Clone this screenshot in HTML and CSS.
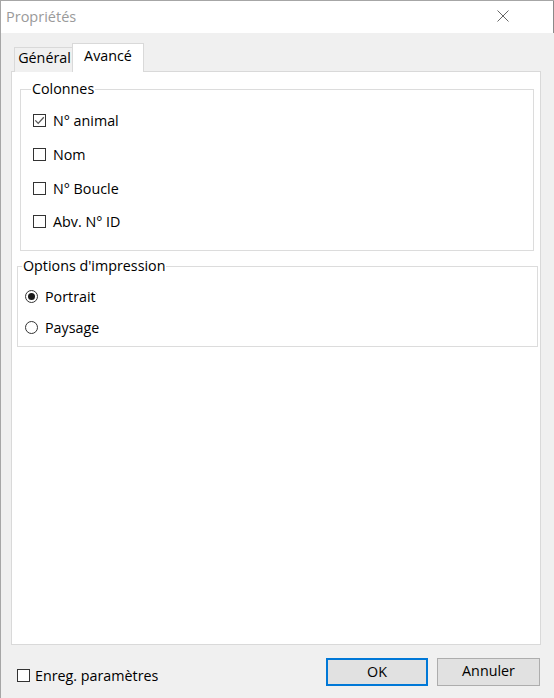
FILE: index.html
```html
<!DOCTYPE html>
<html lang="fr">
<head>
<meta charset="utf-8">
<title>Propriétés</title>
<link rel="stylesheet" href="styles.css">
</head>
<body>
<div class="window">
  <div class="titlebar">
    <span class="title">Propriétés</span>
    <svg class="close" width="12" height="12" viewBox="0 0 12 12"><path d="M0.5 0.5 L11.5 11.5 M11.5 0.5 L0.5 11.5" stroke="#666" stroke-width="1" fill="none"/></svg>
  </div>
  <div class="body">
    <div class="tabs">
      <div class="tab">Général</div>
      <div class="tab active">Avancé</div>
    </div>
    <div class="panel">
      <fieldset class="group cols">
        <legend>Colonnes</legend>
        <div class="opt"><span class="cb checked"><svg width="11" height="11" viewBox="0 0 11 11"><path d="M1.3 5.4 L4.2 8.4 L9.8 2.2" stroke="#555" stroke-width="1.3" fill="none"/></svg></span><span>N° animal</span></div>
        <div class="opt"><span class="cb"></span><span>Nom</span></div>
        <div class="opt"><span class="cb"></span><span>N° Boucle</span></div>
        <div class="opt"><span class="cb"></span><span>Abv. N° ID</span></div>
      </fieldset>
      <fieldset class="group print">
        <legend>Options d'impression</legend>
        <div class="ropt"><span class="rb on"></span><span>Portrait</span></div>
        <div class="ropt"><span class="rb"></span><span>Paysage</span></div>
      </fieldset>
    </div>
    <div class="footer">
      <div class="save"><span class="cb"></span><span>Enreg. paramètres</span></div>
      <div class="buttons">
        <div class="btn default">OK</div>
        <div class="btn">Annuler</div>
      </div>
    </div>
  </div>
</div>
</body>
</html>
```
FILE: styles.css
```css
* { box-sizing: border-box; }
html, body { margin: 0; padding: 0; }
body {
  font-family: "Open Sans", "Noto Sans", sans-serif;
  font-size: 14.3px;
  color: #000;
  background: #f0f0f0;
}
.window {
  width: 554px;
  height: 698px;
  border-top: 1px solid #a6a6a6;
  border-left: 1px solid #a6a6a6;
  background: #f0f0f0;
  display: flex;
  flex-direction: column;
}
.titlebar {
  height: 32px;
  background: #fff;
  border-right: 1px solid #8a8a8a;
  display: flex;
  align-items: center;
  justify-content: space-between;
  padding-left: 5px;
  padding-right: 44px;
}
.title {
  color: #9a9a9a;
  font-size: 14.5px;
  line-height: 20px;
}
.close { display: block; margin-top: -2px; }
.body {
  flex: 1;
  display: flex;
  flex-direction: column;
  padding: 10px 13px 12px 10px;
}
.tabs {
  display: flex;
  align-items: flex-end;
  height: 29px;
  padding-left: 3px;
  position: relative;
  z-index: 1;
}
.tab {
  height: 25px;
  width: 59px;
  border: 1px solid #d9d9d9;
  border-bottom: none;
  background: #f0f0f0;
  text-align: center;
  line-height: 20px;
  padding-left: 2px;
}
.tab.active {
  height: 29px;
  width: 72px;
  background: #fff;
  margin-left: -1px;
  padding-left: 0;
  line-height: 24px;
}
.panel {
  height: 574px;
  margin-top: -1px;
  background: #fff;
  border: 1px solid #d9d9d9;
  padding: 8px 2px 0 5px;
}
.group {
  margin: 0;
  border: 1px solid #dcdcdc;
  min-width: 0;
}
.group legend {
  padding: 0 1px;
  line-height: 18px;
}
.cols {
  margin-left: 3px;
  margin-right: 4px;
  height: 171px;
  padding: 6px 12px 0 12px;
}
.cols legend { margin-left: -2px; }
.opt {
  display: flex;
  align-items: center;
  height: 33.7px;
  gap: 7px;
}
.cb {
  width: 13px;
  height: 13px;
  border: 1px solid #333;
  background: #fff;
  display: flex;
  align-items: center;
  justify-content: center;
  flex: none;
}
.cb svg { display: block; }
.print {
  margin-top: 6px;
  height: 90px;
  padding: 6px 8px 0 8px;
}
.print legend { margin-left: -4px; }
.ropt {
  display: flex;
  align-items: center;
  height: 31px;
  gap: 7px;
}
.rb {
  width: 13px;
  height: 13px;
  border: 1px solid #333;
  border-radius: 50%;
  background: #fff;
  display: flex;
  align-items: center;
  justify-content: center;
  flex: none;
  margin-left: -1px;
}
.rb.on::after {
  content: "";
  width: 7px;
  height: 7px;
  border-radius: 50%;
  background: #1a1a1a;
}
.footer {
  margin-top: 13px;
  height: 28px;
  display: flex;
  align-items: center;
  justify-content: space-between;
  padding-left: 6px;
  padding-right: 1px;
}
.save {
  display: flex;
  align-items: center;
  gap: 5px;
  padding-top: 6px;
}
.buttons { display: flex; gap: 9px; }
.btn {
  width: 103px;
  height: 28px;
  background: #e1e1e1;
  border: 1px solid #adadad;
  text-align: center;
  line-height: 24px;
}
.btn.default {
  width: 102px;
  border: 2px solid #0078d7;
}
```
